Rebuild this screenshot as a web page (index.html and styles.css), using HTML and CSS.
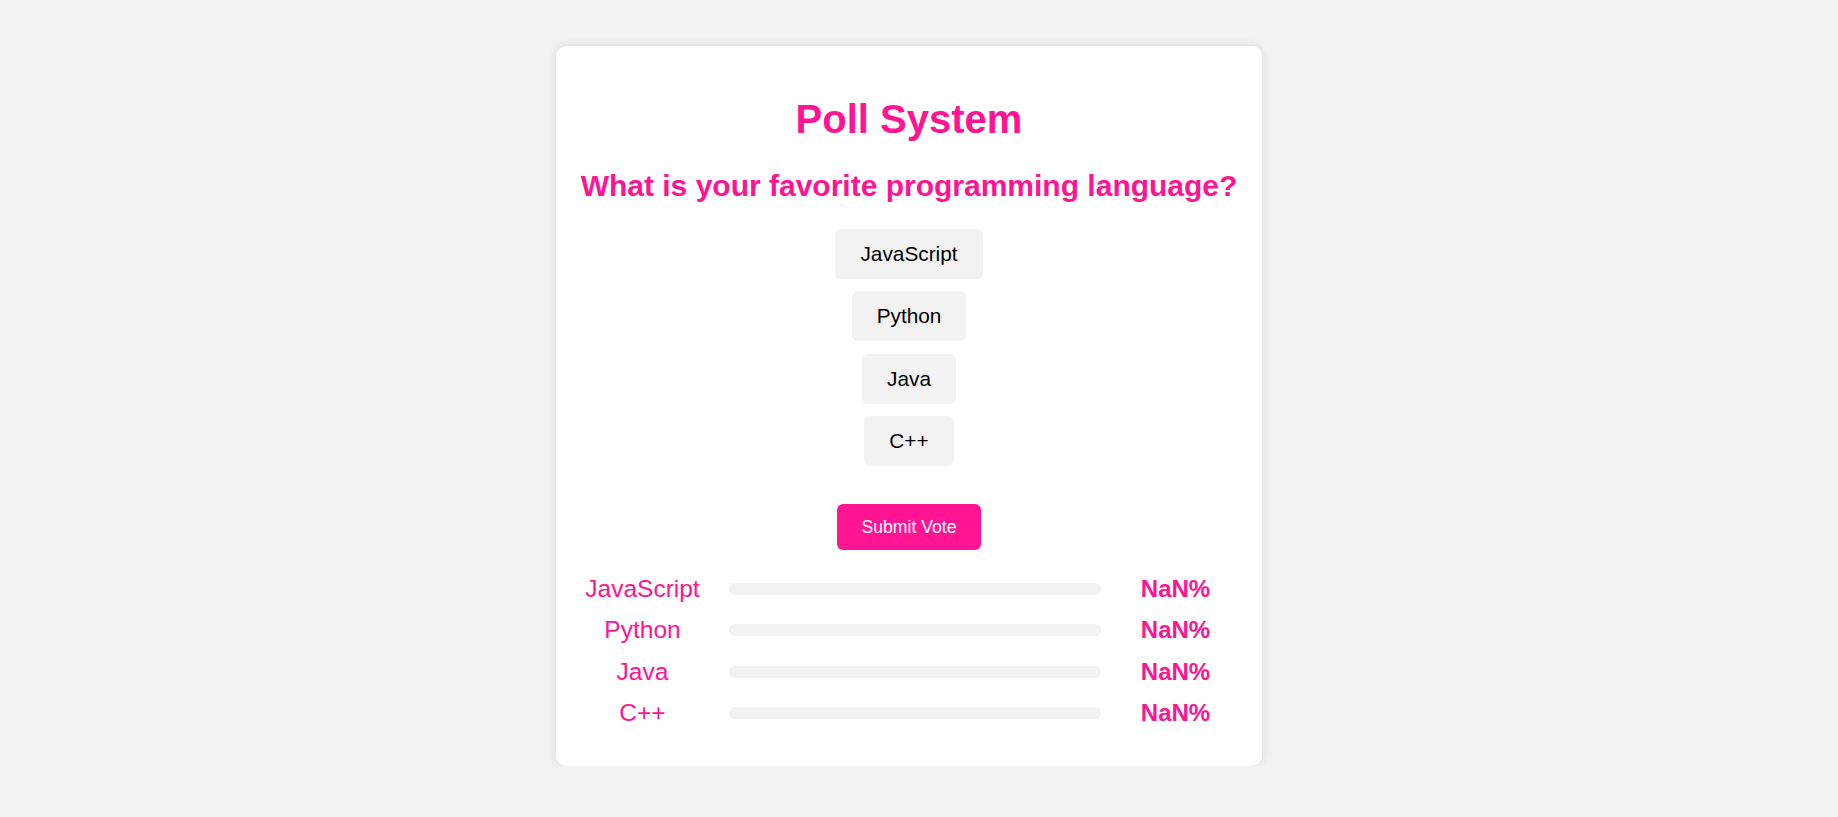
FILE: index.html
```html
<!DOCTYPE html>
<html lang="en">
<head>
<meta charset="utf-8">
<title>Poll System</title>
<link rel="stylesheet" href="styles.css">
</head>
<body>
<div class="page">
  <div class="card">
    <h1 class="title">Poll System</h1>
    <h2 class="question">What is your favorite programming language?</h2>
    <div class="options">
      <button class="option">JavaScript</button>
      <button class="option">Python</button>
      <button class="option">Java</button>
      <button class="option">C++</button>
    </div>
    <button class="submit">Submit Vote</button>
    <div class="results">
      <div class="row">
        <span class="label">JavaScript</span>
        <div class="track"><div class="fill" style="width:0%"></div></div>
        <span class="pct">NaN%</span>
      </div>
      <div class="row">
        <span class="label">Python</span>
        <div class="track"><div class="fill" style="width:0%"></div></div>
        <span class="pct">NaN%</span>
      </div>
      <div class="row">
        <span class="label">Java</span>
        <div class="track"><div class="fill" style="width:0%"></div></div>
        <span class="pct">NaN%</span>
      </div>
      <div class="row">
        <span class="label">C++</span>
        <div class="track"><div class="fill" style="width:0%"></div></div>
        <span class="pct">NaN%</span>
      </div>
    </div>
  </div>
</div>
</body>
</html>
```
FILE: styles.css
```css
html, body {
  margin: 0;
  padding: 0;
}
body {
  background: #f2f2f2;
  font-family: "Liberation Sans", Arial, sans-serif;
  color: #000;
}
.page {
  display: flex;
  justify-content: center;
  align-items: flex-start;
  padding: 46px 20px 0 0;
}
.card {
  box-sizing: border-box;
  width: 706px;
  padding: 50px 20px 39px;
  background: #fff;
  border-radius: 10px;
  box-shadow: 0 0 10px rgba(0, 0, 0, 0.1);
  text-align: center;
  display: flex;
  flex-direction: column;
  align-items: center;
}
.title {
  margin: 0;
  font-size: 40px;
  line-height: 46px;
  font-weight: bold;
  color: #ff1493;
}
.question {
  margin: 26px 0 0;
  font-size: 30px;
  line-height: 35px;
  font-weight: bold;
  color: #ff1493;
  white-space: nowrap;
}
.options {
  margin-top: 26px;
  display: flex;
  flex-direction: column;
  align-items: center;
  gap: 12.3px;
}
.option {
  font-family: "Liberation Sans", Arial, sans-serif;
  font-size: 20.8px;
  line-height: normal;
  padding: 13px 25px;
  border: none;
  border-radius: 6px;
  background: #f2f2f2;
  color: #000;
  cursor: pointer;
}
.submit {
  margin-top: 38.5px;
  font-family: "Liberation Sans", Arial, sans-serif;
  font-size: 17.6px;
  line-height: normal;
  padding: 12.5px 25px;
  border: none;
  border-radius: 6px;
  background: #ff1493;
  color: #fff;
  cursor: pointer;
}
.results {
  align-self: stretch;
  margin-top: 24.6px;
  display: flex;
  flex-direction: column;
  gap: 13.9px;
}
.row {
  display: grid;
  grid-template-columns: 133px 1fr 133px;
  align-items: center;
  font-size: 24.5px;
  line-height: 27.6px;
  color: #ff1493;
}
.label {
  text-align: center;
}
.track {
  height: 12px;
  margin: 0 8px 0 20px;
  background: #f2f2f2;
  border-radius: 6px;
  overflow: hidden;
}
.fill {
  height: 100%;
  background: #ff1493;
}
.pct {
  text-align: center;
  font-weight: bold;
  font-size: 24px;
}
```
